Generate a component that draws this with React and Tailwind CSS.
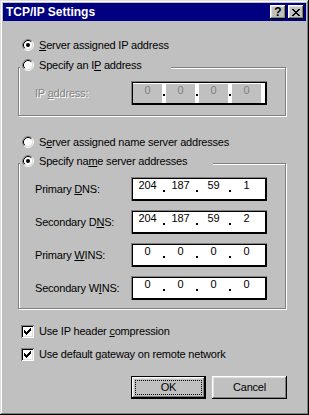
import React, { Fragment } from "react";

const bevel =
  "shadow-[inset_-1px_-1px_#000,inset_1px_1px_#fff,inset_-2px_-2px_#808080,inset_2px_2px_#dfdfdf]";

function Radio({ checked }) {
  return (
    <svg width="12" height="12" viewBox="0 0 12 12" className="shrink-0">
      <circle cx="6" cy="6" r="4.2" fill="#fff" />
      <path d="M2.11 9.89 A5.5 5.5 0 0 1 9.89 2.11" stroke="#808080" fill="none" />
      <path d="M9.89 2.11 A5.5 5.5 0 0 1 2.11 9.89" stroke="#fff" fill="none" />
      <path d="M2.82 9.18 A4.5 4.5 0 0 1 9.18 2.82" stroke="#000" fill="none" />
      <path d="M9.18 2.82 A4.5 4.5 0 0 1 2.82 9.18" stroke="#dfdfdf" fill="none" />
      {checked && <circle cx="6" cy="6" r="2" fill="#000" />}
    </svg>
  );
}

function Check() {
  const cells = [
    [6, 0, 1], [5, 1, 2], [0, 2, 1], [4, 2, 3], [0, 3, 2], [3, 3, 3],
    [0, 4, 5], [1, 5, 3], [2, 6, 1],
  ];
  return (
    <div className="w-[13px] h-[13px] bg-white shrink-0 flex items-center justify-center shadow-[inset_1px_1px_#808080,inset_-1px_-1px_#fff,inset_2px_2px_#000,inset_-2px_-2px_#dfdfdf]">
      <svg width="7" height="7" viewBox="0 0 7 7" shapeRendering="crispEdges">
        {cells.map(([x, y, w], i) => (
          <rect key={i} x={x} y={y} width={w} height="1" fill="#000" />
        ))}
      </svg>
    </div>
  );
}

function XGlyph() {
  const cells = [
    [0, 0, 2], [6, 0, 2], [1, 1, 2], [5, 1, 2], [2, 2, 4], [3, 3, 2],
    [2, 4, 4], [1, 5, 2], [5, 5, 2], [0, 6, 2], [6, 6, 2],
  ];
  return (
    <svg width="8" height="7" viewBox="0 0 8 7" shapeRendering="crispEdges">
      {cells.map(([x, y, w], i) => (
        <rect key={i} x={x} y={y} width={w} height="1" fill="#000" />
      ))}
    </svg>
  );
}

function CapBtn({ children }) {
  return (
    <div className={`w-[16px] h-[14px] bg-[#c0c0c0] flex items-center justify-center ${bevel}`}>
      {children}
    </div>
  );
}

function IpField({ values, disabled }) {
  return (
    <div className="w-[136px] h-[24px] bg-white p-[2px] flex shadow-[inset_1px_1px_#808080,inset_-1px_-1px_#000,inset_2px_2px_#000,inset_-2px_-2px_#000]">
      {values.map((v, i) => (
        <Fragment key={i}>
          {i > 0 && (
            <div className="w-[4px] flex justify-center shrink-0">
              <div className="w-[2px] h-[2px] bg-black mt-[11px]" />
            </div>
          )}
          <div
            className={`w-[29px] shrink-0 text-center leading-[11px] ${
              disabled
                ? "bg-[#c0c0c0] text-[#808080] mt-[1px] pt-[1px]"
                : "text-black pt-[1px]"
            }`}
          >
            {v}
          </div>
        </Fragment>
      ))}
    </div>
  );
}

function FieldRow({ label, values, disabled, className = "" }) {
  return (
    <div className={`flex items-center pl-[16px] ${className}`}>
      <div
        className={`w-[96px] shrink-0 leading-[16px] ${
          disabled ? "text-[#808080] [text-shadow:1px_1px_0_#fff]" : ""
        }`}
      >
        {label}
      </div>
      <IpField values={values} disabled={disabled} />
    </div>
  );
}

function RadioRow({ checked, children, className = "" }) {
  return (
    <div className={`h-[16px] flex items-center gap-[5px] ${className}`}>
      <Radio checked={checked} />
      <span className="leading-[16px] whitespace-nowrap">{children}</span>
    </div>
  );
}

function CheckRow({ children, className = "" }) {
  return (
    <div className={`h-[16px] flex items-center gap-[5px] ml-[3px] ${className}`}>
      <Check />
      <span className="leading-[16px] whitespace-nowrap">{children}</span>
    </div>
  );
}

function Group({ legend, legendW, checked, className = "", children }) {
  return (
    <div
      className={`w-[268px] border border-[#808080] shadow-[inset_1px_1px_#fff,1px_1px_#fff] flex flex-col ${className}`}
    >
      <div className={`-mt-[11px] ml-[1px] pl-[2px] bg-[#c0c0c0] ${legendW}`}>
        <RadioRow checked={checked}>{legend}</RadioRow>
      </div>
      {children}
    </div>
  );
}

export default function App() {
  return (
    <div className="w-[309px] h-[415px] bg-[#c0c0c0] p-[3px] flex flex-col text-black text-[11px] tracking-[-0.2px] font-['Liberation_Sans',Arial,sans-serif] shadow-[inset_-1px_-1px_#000,inset_1px_1px_#dfdfdf,inset_-2px_-2px_#808080,inset_2px_2px_#fff]">
      <div className="h-[18px] shrink-0 bg-[#000080] flex items-center pl-[3px] pr-[2px]">
        <span className="text-white font-bold text-[12px] tracking-normal leading-[18px]">
          TCP/IP Settings
        </span>
        <div className="ml-auto flex gap-[2px]">
          <CapBtn>
            <span className="font-bold text-[12px] leading-none tracking-normal -mt-[1px]">?</span>
          </CapBtn>
          <CapBtn>
            <XGlyph />
          </CapBtn>
        </div>
      </div>

      <div className="flex flex-col pl-[15px] pt-[16px]">
        <RadioRow checked className="ml-[4px]">
          <u>S</u>erver assigned IP address
        </RadioRow>

        <Group
          className="mt-[14px] pb-[10px]"
          legendW="w-[151px]"
          legend={
            <>
              Specify an I<u>P</u> address
            </>
          }
        >
          <FieldRow
            className="mt-[8px]"
            disabled
            label={
              <>
                IP <u>a</u>ddress:
              </>
            }
            values={["0", "0", "0", "0"]}
          />
        </Group>

        <RadioRow className="ml-[4px] mt-[18px]">
          S<u>e</u>rver assigned name server addresses
        </RadioRow>

        <Group
          checked
          className="mt-[13px] pb-[8px]"
          legendW="w-[193px]"
          legend={
            <>
              Specify na<u>m</u>e server addresses
            </>
          }
        >
          <div className="flex flex-col gap-[9px] mt-[8px]">
            <FieldRow
              label={
                <>
                  Primary <u>D</u>NS:
                </>
              }
              values={["204", "187", "59", "1"]}
            />
            <FieldRow
              label={
                <>
                  Secondary D<u>N</u>S:
                </>
              }
              values={["204", "187", "59", "2"]}
            />
            <FieldRow
              label={
                <>
                  Primary <u>W</u>INS:
                </>
              }
              values={["0", "0", "0", "0"]}
            />
            <FieldRow
              label={
                <>
                  Secondary W<u>I</u>NS:
                </>
              }
              values={["0", "0", "0", "0"]}
            />
          </div>
        </Group>

        <CheckRow className="mt-[14px]">
          Use IP header <u>c</u>ompression
        </CheckRow>
        <CheckRow className="mt-[7px]">
          Use default <u>g</u>ateway on remote network
        </CheckRow>

        <div className="flex gap-[6px] ml-[113px] mt-[14px]">
          <div className="w-[75px] h-[23px] border border-black p-[3px] shadow-[inset_-1px_-1px_#000,inset_1px_1px_#fff,inset_-2px_-2px_#808080,inset_2px_2px_#dfdfdf]">
            <div className="w-full h-full border border-dotted border-black flex items-center justify-center">
              OK
            </div>
          </div>
          <div className={`w-[75px] h-[23px] flex items-center justify-center ${bevel}`}>
            Cancel
          </div>
        </div>
      </div>
    </div>
  );
}
